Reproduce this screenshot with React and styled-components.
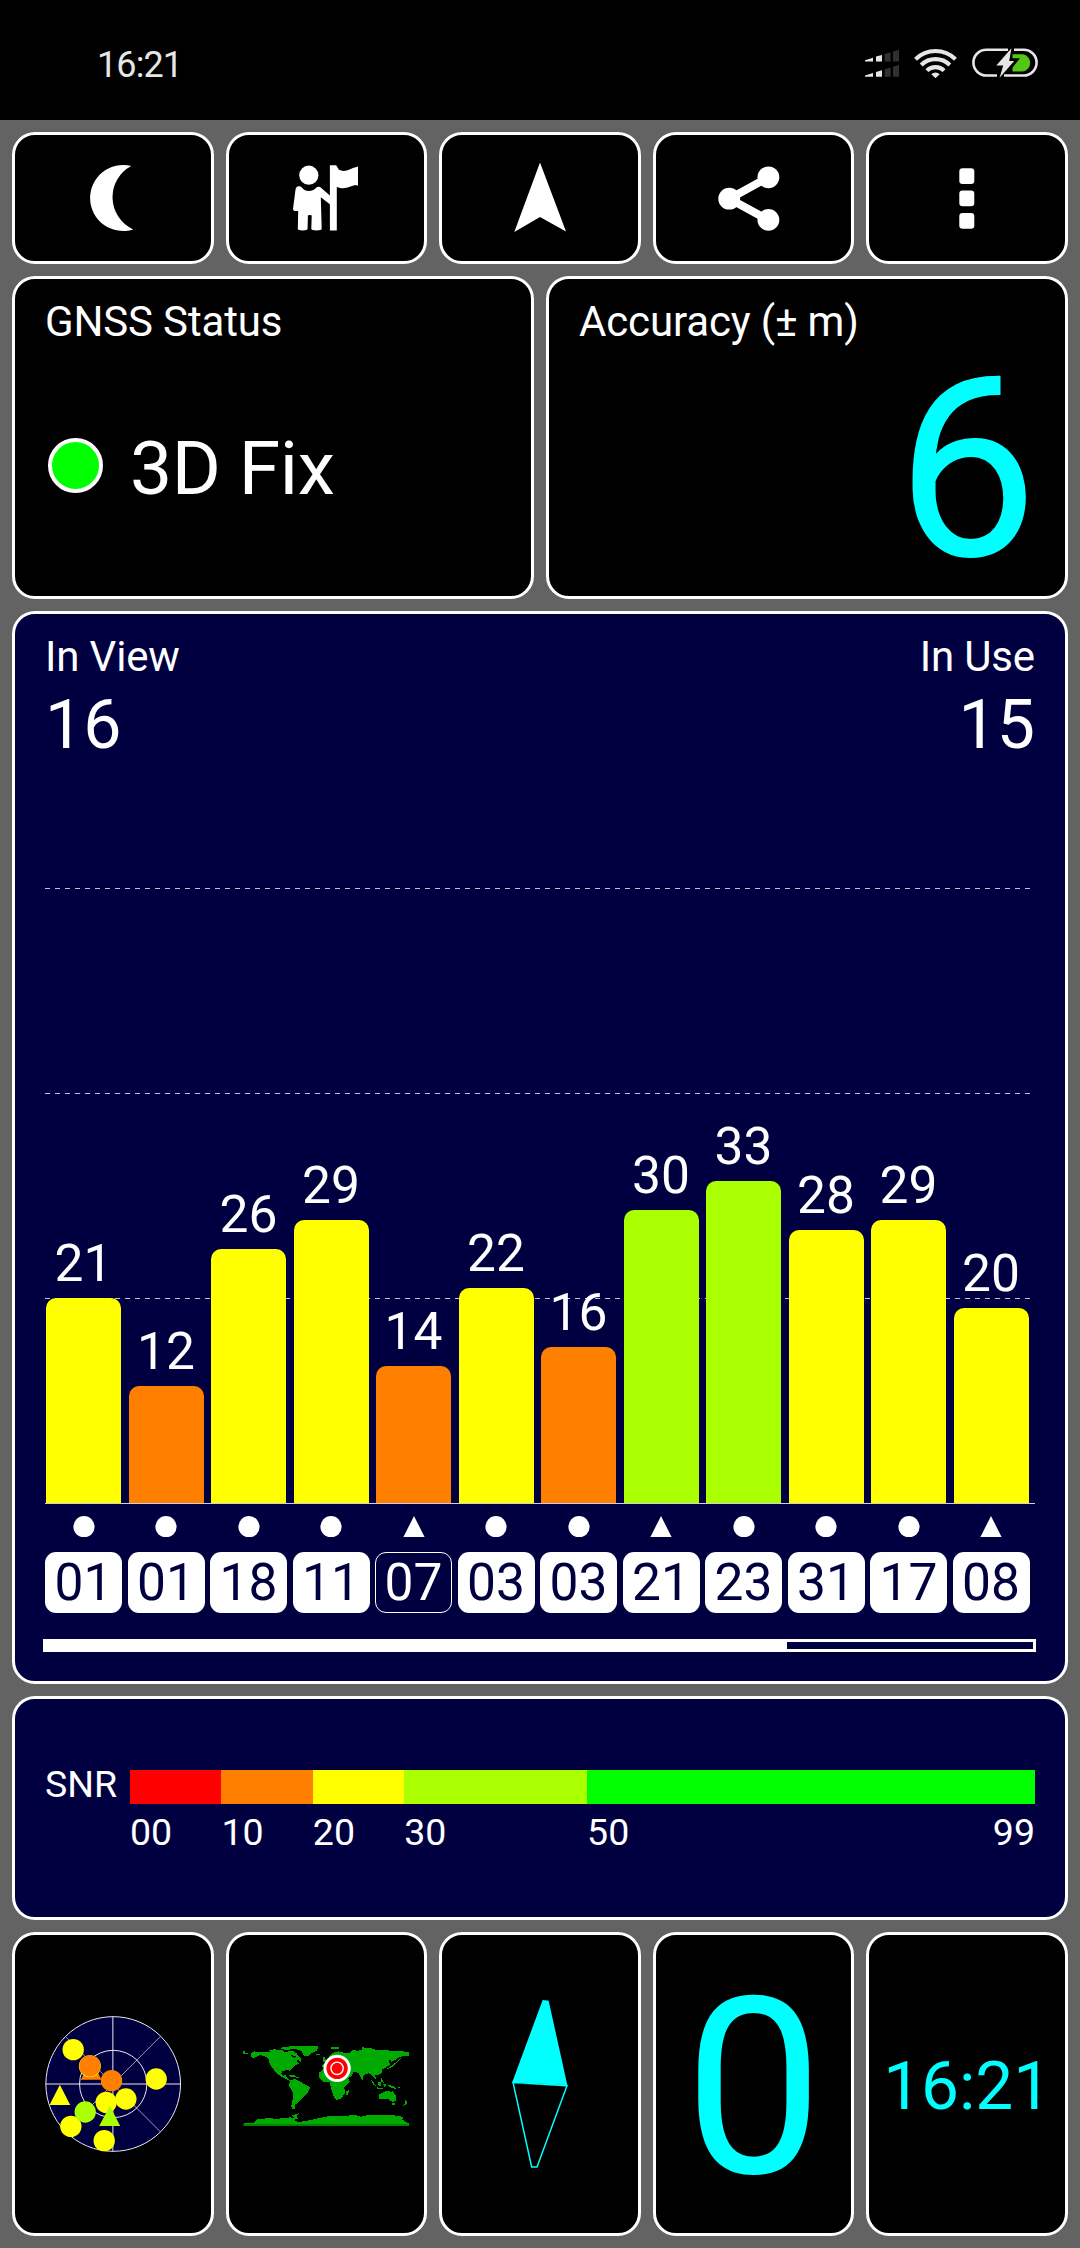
import styled, { createGlobalStyle } from "styled-components";

const GlobalStyle = createGlobalStyle`
  * {
    box-sizing: border-box;
  }
  body {
    margin: 0;
    background: #636363;
    font-family: Roboto, "Liberation Sans", sans-serif;
    color: #ffffff;
  }
  svg {
    display: block;
  }
`;

const Screen = styled.div`
  width: 1080px;
  height: 2248px;
  background: #636363;
`;

const StatusBar = styled.div`
  display: flex;
  align-items: center;
  justify-content: space-between;
  height: 120px;
  padding: 10px 42px 0 97px;
  background: #000000;
`;

const StatusTime = styled.span`
  font-size: 36px;
  line-height: 42px;
  letter-spacing: -0.9px;
  color: #e6e6e6;
`;

const StatusIcons = styled.div`
  display: flex;
  align-items: center;
  gap: 15px;
  margin-top: -4px;
`;

const Page = styled.div`
  display: grid;
  grid-template-rows: 132px 323px 1073px 224px 304px;
  gap: 12px;
  padding: 12px;
`;

const Row = styled.div`
  display: grid;
  grid-template-columns: repeat(${(props) => props.$columns}, minmax(0, 1fr));
  gap: 12px;
`;

const Panel = styled.div`
  border: 3px solid #ffffff;
  border-radius: 23px;
  background: ${(props) => (props.$blue ? "#000040" : "#000000")};
`;

const Tile = styled(Panel)`
  display: flex;
  align-items: center;
  justify-content: center;
`;

const InfoPanel = styled(Panel)`
  padding: 18px 30px 0;
`;

const Label = styled.div`
  font-size: 42px;
  line-height: 49px;
  letter-spacing: -0.15px;
`;

const FixRow = styled.div`
  display: flex;
  align-items: center;
  margin-top: 78px;
  padding-left: 3px;
`;

const FixLight = styled.div`
  width: 55px;
  height: 55px;
  margin: 0 27px 6px 0;
  border: 4px solid #ffffff;
  border-radius: 50%;
  background: #00ff00;
`;

const FixText = styled.div`
  font-size: 75px;
  line-height: 88px;
  letter-spacing: -0.4px;
`;

const Accuracy = styled.div`
  margin: 4px -3px 0 0;
  font-size: 252px;
  line-height: 240px;
  text-align: right;
  color: #00ffff;
`;

const Counts = styled.div`
  display: flex;
  justify-content: space-between;
`;

const Count = styled.div`
  text-align: ${(props) => props.$align || "left"};
`;

const CountValue = styled.div`
  margin-top: 4px;
  font-size: 68px;
  line-height: 80px;
`;

const Plot = styled.div`
  position: relative;
  display: grid;
  grid-template-columns: repeat(12, 82.5px);
  align-items: end;
  height: 739px;
  border-bottom: 1px solid #d0d0dc;
`;

const GridLine = styled.div`
  position: absolute;
  left: 0;
  right: 5px;
  height: 1px;
  background: repeating-linear-gradient(90deg, #c4c4d2 0 5px, transparent 5px 10px);
`;

const BarCell = styled.div`
  position: relative;
  width: 77px;
  padding: 0 1px;
`;

const BarValue = styled.div`
  margin-bottom: 4px;
  font-size: 51.5px;
  line-height: 60px;
  text-align: center;
`;

const Bar = styled.div`
  border-radius: 10px 10px 0 0;
  background: ${(props) => props.$color};
`;

const SatRow = styled.div`
  display: grid;
  grid-template-columns: repeat(12, 82.5px);
  margin-top: ${(props) => props.$top}px;
`;

const SatMark = styled.div`
  width: 77px;
  height: 21px;
  display: flex;
  justify-content: center;
`;

const SatId = styled.div`
  width: 77px;
  height: 61px;
  border: ${(props) => (props.$used ? "none" : "1px solid #ffffff")};
  border-radius: 11px;
  background: ${(props) => (props.$used ? "#ffffff" : "transparent")};
  color: ${(props) => (props.$used ? "#000040" : "#ffffff")};
  font-size: 51.5px;
  line-height: ${(props) => (props.$used ? 62 : 60)}px;
  text-align: center;
`;

const ScrollTrack = styled.div`
  height: 13px;
  margin: 26px -1px 0 -2px;
  border: 3px solid #ffffff;
`;

const ScrollThumb = styled.div`
  width: 741px;
  height: 100%;
  background: #ffffff;
`;

const SnrPanel = styled(Panel)`
  display: grid;
  grid-template-columns: 85px 905px;
  align-content: start;
  padding: 63px 30px 0;
  font-size: 37.5px;
  line-height: 44px;
`;

const SnrScale = styled.div`
  display: grid;
  grid-template-columns: 10fr 10fr 10fr 20fr 49fr;
  grid-template-rows: 34px 44px;
  row-gap: 6px;
  padding-top: 8px;
`;

const SnrBand = styled.div`
  background: ${(props) => props.$color};
`;

const SnrTick = styled.div`
  display: flex;
  justify-content: space-between;
`;

const Readout = styled.div`
  padding-top: ${(props) => props.$drop}px;
  font-size: ${(props) => props.$size}px;
  line-height: ${(props) => props.$size}px;
  color: #00ffff;
`;

const YELLOW = "#ffff00";
const ORANGE = "#ff8000";
const LIME = "#aaff00";

const UNIT = 9.76;

const satellites = [
  { id: "01", snr: 21, color: YELLOW, used: true },
  { id: "01", snr: 12, color: ORANGE, used: true },
  { id: "18", snr: 26, color: YELLOW, used: true },
  { id: "11", snr: 29, color: YELLOW, used: true },
  { id: "07", snr: 14, color: ORANGE, used: false, triangle: true },
  { id: "03", snr: 22, color: YELLOW, used: true },
  { id: "03", snr: 16, color: ORANGE, used: true },
  { id: "21", snr: 30, color: LIME, used: true, triangle: true },
  { id: "23", snr: 33, color: LIME, used: true },
  { id: "31", snr: 28, color: YELLOW, used: true },
  { id: "17", snr: 29, color: YELLOW, used: true },
  { id: "08", snr: 20, color: YELLOW, used: true, triangle: true },
];

const bands = [
  { color: "#ff0000", label: "00" },
  { color: ORANGE, label: "10" },
  { color: YELLOW, label: "20" },
  { color: LIME, label: "30" },
  { color: "#00ff00", label: "50", end: "99" },
];

const SignalIcon = () => (
  <svg width="34" height="30" viewBox="866 48 34 30">
    {[0, 15.3].map((dy) => (
      <g key={dy} transform={`translate(0 ${dy})`}>
        <path d="M866 60.2L874 57.8V61.5H866zM877 56.6L883 54.9V61.5H877z" fill="#e6e6e6" />
        <path d="M885.6 54L891.6 52.2V61.5H885.6zM894 51.4L900 49.8V61.5H894z" fill="#303030" />
      </g>
    ))}
  </svg>
);

const WifiIcon = () => (
  <svg width="43" height="30" viewBox="914.5 48 43 30" fill="none" stroke="#e6e6e6" strokeWidth="4.1">
    <path d="M916 59.2A28.5 28.5 0 0 1 956 59.2" />
    <path d="M921.7 65A20.3 20.3 0 0 1 950.3 65" />
    <path d="M927.4 70.6A12.3 12.3 0 0 1 944.6 70.6" />
    <path d="M936 78.2L931.8 74.2A6 6 0 0 1 940.2 74.2z" fill="#e6e6e6" stroke="none" />
  </svg>
);

const BatteryIcon = () => (
  <svg width="66" height="30" viewBox="972 48 66 30">
    <path
      d="M1008 49.7H986.3A12.9 12.9 0 0 0 986.3 75.5H997M1014 49.7H1023.7A12.9 12.9 0 0 1 1023.7 75.5H1004"
      fill="none"
      stroke="#e6e6e6"
      strokeWidth="2.6"
    />
    <path d="M1012.5 54.3H1023A8.8 8.8 0 0 1 1023 71.6H1012.5V67.4L1020 58.2H1012.5z" fill="#55c516" />
    <path d="M1011.4 48.2L996.3 65.5H1003.2L999.6 77.8L1014.2 61H1009.2z" fill="#e6e6e6" />
  </svg>
);

// every toolbar icon is drawn in a 100x80 box around its button centre
const ToolIcon = ({ cx, children }) => (
  <svg width="100" height="80" viewBox={`${cx - 50} 158 100 80`} fill="#ffffff">
    {children}
  </svg>
);

const Toolbar = () => (
  <Row $columns={5}>
    <Tile>
      <ToolIcon cx={112.8}>
        <path d="M131 166A33 33 0 1 0 133 229.4A35.4 35.4 0 0 1 131 166z" />
      </ToolIcon>
    </Tile>
    <Tile>
      <ToolIcon cx={326.4}>
        <circle cx="309.2" cy="175.2" r="9.6" />
        <path d="M296 189Q296.6 186.4 298.6 186.3Q301 186 302.5 187.7Q305 191 309.2 191Q313.5 191 316.5 187.7Q318.5 186 320.5 187L330.6 195.8V204.5L321.2 197.2L322.1 229Q322 230.4 317 230.4Q311.8 230.4 311.7 229L312.1 215.6Q312 215 310.2 215Q308.4 215 308.3 215.6L308 229Q307.8 230.4 303 230.4Q298.3 230.4 298.2 229L298.6 211H295Q293.4 210.6 293.4 209z" />
        <path d="M330.3 165.2H336.6L339.3 169.8C346 173 350 168.6 358.4 166.5V185.7C352 183.8 347.5 191 337.2 187V230.6H330.3z" />
      </ToolIcon>
    </Tile>
    <Tile>
      <ToolIcon cx={540}>
        <path d="M540 162.5L566 231.5L540 217L514.3 232z" />
      </ToolIcon>
    </Tile>
    <Tile>
      <ToolIcon cx={753.6}>
        <path d="M768 177.3L729 198.7L768 220" fill="none" stroke="#ffffff" strokeWidth="8" />
        <circle cx="728.8" cy="198.7" r="10.9" />
        <circle cx="768" cy="177.3" r="10.9" />
        <circle cx="768" cy="219.9" r="10.9" />
      </ToolIcon>
    </Tile>
    <Tile>
      <ToolIcon cx={967.2}>
        <rect x="959.5" y="168.2" width="15" height="15.7" rx="3.2" />
        <rect x="959.5" y="190.6" width="15" height="15.7" rx="3.2" />
        <rect x="959.5" y="213" width="15" height="15.7" rx="3.2" />
      </ToolIcon>
    </Tile>
  </Row>
);

const SatelliteChart = () => (
  <InfoPanel $blue>
    <Counts>
      <Count>
        <Label>In View</Label>
        <CountValue>16</CountValue>
      </Count>
      <Count $align="right">
        <Label>In Use</Label>
        <CountValue>15</CountValue>
      </Count>
    </Counts>
    <Plot>
      {[1, 2, 3].map((n) => (
        <GridLine key={n} style={{ bottom: n * 21 * UNIT - 1 }} />
      ))}
      {satellites.map((sat, i) => (
        <BarCell key={i}>
          <BarValue>{sat.snr}</BarValue>
          <Bar $color={sat.color} style={{ height: sat.snr * UNIT }} />
        </BarCell>
      ))}
    </Plot>
    <SatRow $top={12}>
      {satellites.map((sat, i) => (
        <SatMark key={i}>
          <svg width="22" height="21" viewBox="0 0 22 21" fill="#ffffff">
            {sat.triangle ? <path d="M11 0L21.6 21H0.4z" /> : <circle cx="11" cy="10.7" r="10.6" />}
          </svg>
        </SatMark>
      ))}
    </SatRow>
    <SatRow $top={15}>
      {satellites.map((sat, i) => (
        <SatId key={i} $used={sat.used}>
          {sat.id}
        </SatId>
      ))}
    </SatRow>
    <ScrollTrack>
      <ScrollThumb />
    </ScrollTrack>
  </InfoPanel>
);

const SnrLegend = () => (
  <SnrPanel $blue>
    <div>SNR</div>
    <SnrScale>
      {bands.map((band) => (
        <SnrBand key={band.label} $color={band.color} />
      ))}
      {bands.map((band) => (
        <SnrTick key={band.label}>
          <span>{band.label}</span>
          {band.end && <span>{band.end}</span>}
        </SnrTick>
      ))}
    </SnrScale>
  </SnrPanel>
);

const SkyView = () => (
  <svg width="140" height="140" viewBox="128.4 282 420 420">
    <g fill="none" stroke="#e8e8f0" strokeWidth="3">
      <circle cx="339" cy="492" r="202" fill="#000040" />
      <circle cx="339" cy="492" r="101" />
      <path d="M338 290V694M137 492H541" />
      <path d="M196 350L480 635M480 350L196 635" strokeWidth="2" />
    </g>
    <path d="M273 418L304 479H242z" fill={ORANGE} />
    <circle cx="269" cy="439" r="33" fill={YELLOW} />
    <g fill={ORANGE}>
      <circle cx="269" cy="438" r="32" />
      <circle cx="334" cy="482" r="32" />
    </g>
    <g fill={YELLOW}>
      <circle cx="219" cy="389" r="32" />
      <circle cx="468" cy="477" r="32" />
      <circle cx="377" cy="537" r="32" />
      <circle cx="318" cy="547" r="32" />
      <circle cx="212" cy="619" r="32" />
      <circle cx="312" cy="662" r="32" />
      <path d="M179 494L210 555H148z" />
    </g>
    <g fill={LIME}>
      <circle cx="255" cy="576" r="32" />
      <path d="M329 557L360 618H297z" />
    </g>
  </svg>
);

const WorldMap = () => (
  <svg width="180" height="100" viewBox="49.2 132 540 300">
    <g fill="#00aa00" shapeRendering="crispEdges">
      <path d="M93 189L103 184L120 186H200L212 182L222 190L214 198L226 204L232 194L244 206L245 217L232 208L234 216L240 221L226 226L216 236L210 242L204 240L188 243L184 252L192 258L200 252L198 260L208 268L214 274L208 272L198 266L184 260L172 250L158 234L150 222L148 208L134 197L118 196L104 204L94 202z" />
      <path d="M70 184H76V190H84V193H70z" />
      <path d="M148 182L162 178L190 180L196 186L178 188L152 185zM182 174L200 170L236 168L230 174L206 180L190 178z" />
      <path d="M206 184L222 184L234 192L230 200L220 196L210 190z" />
      <path d="M222 176L240 168H297L292 182L276 190L262 200L252 196L246 184L234 179z" />
      <path d="M288 192H300V194H288z" />
      <path d="M206 254H224L230 260H212zM228 262H238V265H228z" />
      <path d="M212 270L228 267L240 274L254 282L272 291L264 308L254 318L244 328L234 338L227 344L226 356L220 358L215 350L221 320L218 302L208 288z" />
      <path d="M298 248L312 238L330 240L350 246L368 248L386 266L391 274L374 292L376 310L364 326L351 330L343 322L333 290L330 277L312 276L298 262z" />
      <path d="M380 304L390 299L384 316L378 314z" />
      <path d="M310 202H316L320 214L310 216z" />
      <path d="M306 228L312 222L324 218L336 206L328 200L340 188L356 184L372 188L384 190L398 184L416 182L430 180L444 174L460 176L470 180L500 180L522 184L548 184L567 186V198L550 198L540 202L522 212L516 216L514 208L506 212L512 224L496 234L486 238L488 248L476 254H466L468 262L474 270L466 266L456 254L446 250L438 252L430 258L430 270L424 264L418 250L402 244L396 258L384 264L376 250L362 240L340 238L318 236z" />
      <path d="M334 172H358V176H334zM394 182L410 178V182L396 186zM428 172L462 176V179H428z" />
      <path d="M518 226L530 216L546 202L530 220L514 234L498 238z" />
      <path d="M452 268L462 276L470 290L462 284zM472 292L490 294V297H474zM476 276L486 274L484 290L476 286zM490 280L500 284L494 292zM484 258L488 270L494 280L484 270zM504 284L526 290L530 298L512 292zM530 294L542 290V293z" />
      <path d="M478 314L488 308L498 304L508 302L514 308L518 302L530 318L528 332L518 336L506 328L492 326L478 328z" />
      <path d="M518 340H526V345H518zM556 330L564 336L558 346L550 347L558 340z" />
      <path d="M72 400L104 398L112 388L140 385L176 386L212 382L224 386L218 376L238 370L230 378L236 386L222 390L236 396L270 391L300 384L330 378L380 378L404 374L424 380L440 376L504 376L520 374L534 379L552 380L548 388L558 396L567 400V407H72z" />
    </g>
    <path d="M70 403H567V407H70z" fill="#007700" />
    <circle cx="352.5" cy="235" r="41" fill="#ffffff" />
    <circle cx="352.5" cy="235" r="32" fill="#ff0000" />
    <circle cx="352.5" cy="235" r="18.5" fill="#ff0000" stroke="#ffffff" strokeWidth="4" />
  </svg>
);

const Needle = () => (
  <svg width="80" height="180" viewBox="210 222 240 540">
    <path d="M338 240L356 242L412 496L247 486z" fill="#00ffff" />
    <path d="M249 490L411 498" stroke="#007c7c" strokeWidth="2" />
    <path d="M249 487L411 497L321 741H305z" fill="none" stroke="#00ffff" strokeWidth="4.5" />
  </svg>
);

const App = () => {
  return (
    <>
      <GlobalStyle />
      <Screen>
        <StatusBar>
          <StatusTime>16:21</StatusTime>
          <StatusIcons>
            <SignalIcon />
            <WifiIcon />
            <BatteryIcon />
          </StatusIcons>
        </StatusBar>
        <Page>
          <Toolbar />
          <Row $columns={2}>
            <InfoPanel>
              <Label>GNSS Status</Label>
              <FixRow>
                <FixLight />
                <FixText>3D Fix</FixText>
              </FixRow>
            </InfoPanel>
            <InfoPanel>
              <Label>Accuracy (± m)</Label>
              <Accuracy>6</Accuracy>
            </InfoPanel>
          </Row>
          <SatelliteChart />
          <SnrLegend />
          <Row $columns={5}>
            <Tile>
              <SkyView />
            </Tile>
            <Tile>
              <WorldMap />
            </Tile>
            <Tile>
              <Needle />
            </Tile>
            <Tile>
              <Readout $size={246} $drop={10}>
                0
              </Readout>
            </Tile>
            <Tile>
              <Readout $size={67.5} $drop={3}>
                16:21
              </Readout>
            </Tile>
          </Row>
        </Page>
      </Screen>
    </>
  );
};

export default App;
